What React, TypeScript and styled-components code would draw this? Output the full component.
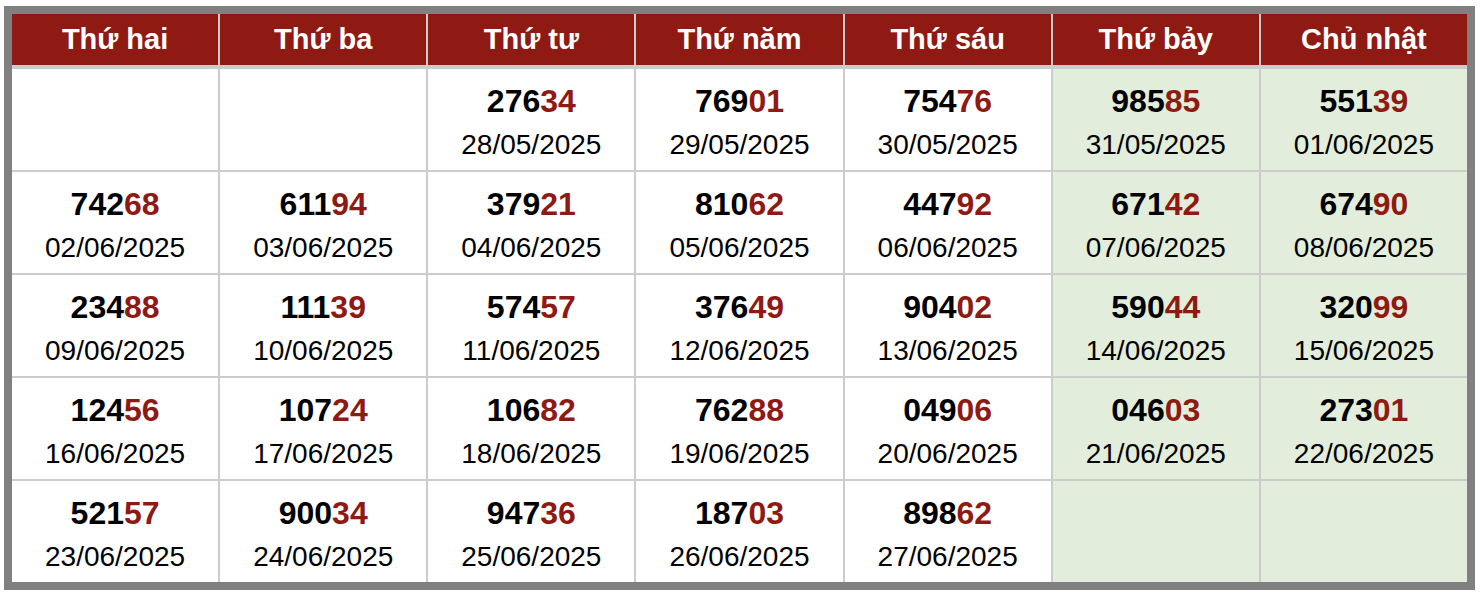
import React from 'react';
import styled, { createGlobalStyle } from 'styled-components';

const GlobalStyle = createGlobalStyle`
  html, body {
    margin: 0;
    padding: 0;
    background: #ffffff;
    font-family: "Liberation Sans", Arial, sans-serif;
  }
`;

const Page = styled.div`
  padding: 6px 7px 0 4px;
`;

const Board = styled.div`
  border: 8px solid #808080;
  background: #cccccc;
  display: grid;
  grid-template-columns: repeat(7, 1fr);
  grid-template-rows: 53px repeat(5, 101px);
  column-gap: 2px;
  row-gap: 2px;
`;

const HeadCell = styled.div`
  box-sizing: border-box;
  background: #8f1a13;
  border-bottom: 2px solid #cccccc;
  color: #ffffff;
  font-weight: 700;
  font-size: 29px;
  line-height: 51px;
  text-align: center;
`;

const DayCell = styled.div<{ $weekend: boolean }>`
  background: ${(p) => (p.$weekend ? '#e2eedb' : '#ffffff')};
  display: flex;
  flex-direction: column;
  align-items: center;
  padding-top: 11px;
`;

const Number = styled.div`
  font-size: 32px;
  font-weight: 700;
  line-height: 42px;
  color: #000000;
`;

const Tail = styled.span`
  color: #8f1a13;
`;

const DateText = styled.div`
  font-size: 28px;
  line-height: 45px;
  color: #000000;
`;

const days = ['Thứ hai', 'Thứ ba', 'Thứ tư', 'Thứ năm', 'Thứ sáu', 'Thứ bảy', 'Chủ nhật'];

type Entry = [string, string] | null;

const rows: Entry[][] = [
  [null, null, ['27634', '28/05/2025'], ['76901', '29/05/2025'], ['75476', '30/05/2025'], ['98585', '31/05/2025'], ['55139', '01/06/2025']],
  [['74268', '02/06/2025'], ['61194', '03/06/2025'], ['37921', '04/06/2025'], ['81062', '05/06/2025'], ['44792', '06/06/2025'], ['67142', '07/06/2025'], ['67490', '08/06/2025']],
  [['23488', '09/06/2025'], ['11139', '10/06/2025'], ['57457', '11/06/2025'], ['37649', '12/06/2025'], ['90402', '13/06/2025'], ['59044', '14/06/2025'], ['32099', '15/06/2025']],
  [['12456', '16/06/2025'], ['10724', '17/06/2025'], ['10682', '18/06/2025'], ['76288', '19/06/2025'], ['04906', '20/06/2025'], ['04603', '21/06/2025'], ['27301', '22/06/2025']],
  [['52157', '23/06/2025'], ['90034', '24/06/2025'], ['94736', '25/06/2025'], ['18703', '26/06/2025'], ['89862', '27/06/2025'], null, null],
];

const App: React.FC = () => {
  return (
    <Page>
      <GlobalStyle />
      <Board>
        {days.map((d) => (
          <HeadCell key={d}>{d}</HeadCell>
        ))}
        {rows.map((row, r) =>
          row.map((entry, c) => (
            <DayCell key={`${r}-${c}`} $weekend={c >= 5}>
              {entry && (
                <>
                  <Number>
                    {entry[0].slice(0, 3)}
                    <Tail>{entry[0].slice(3)}</Tail>
                  </Number>
                  <DateText>{entry[1]}</DateText>
                </>
              )}
            </DayCell>
          ))
        )}
      </Board>
    </Page>
  );
};

export default App;
